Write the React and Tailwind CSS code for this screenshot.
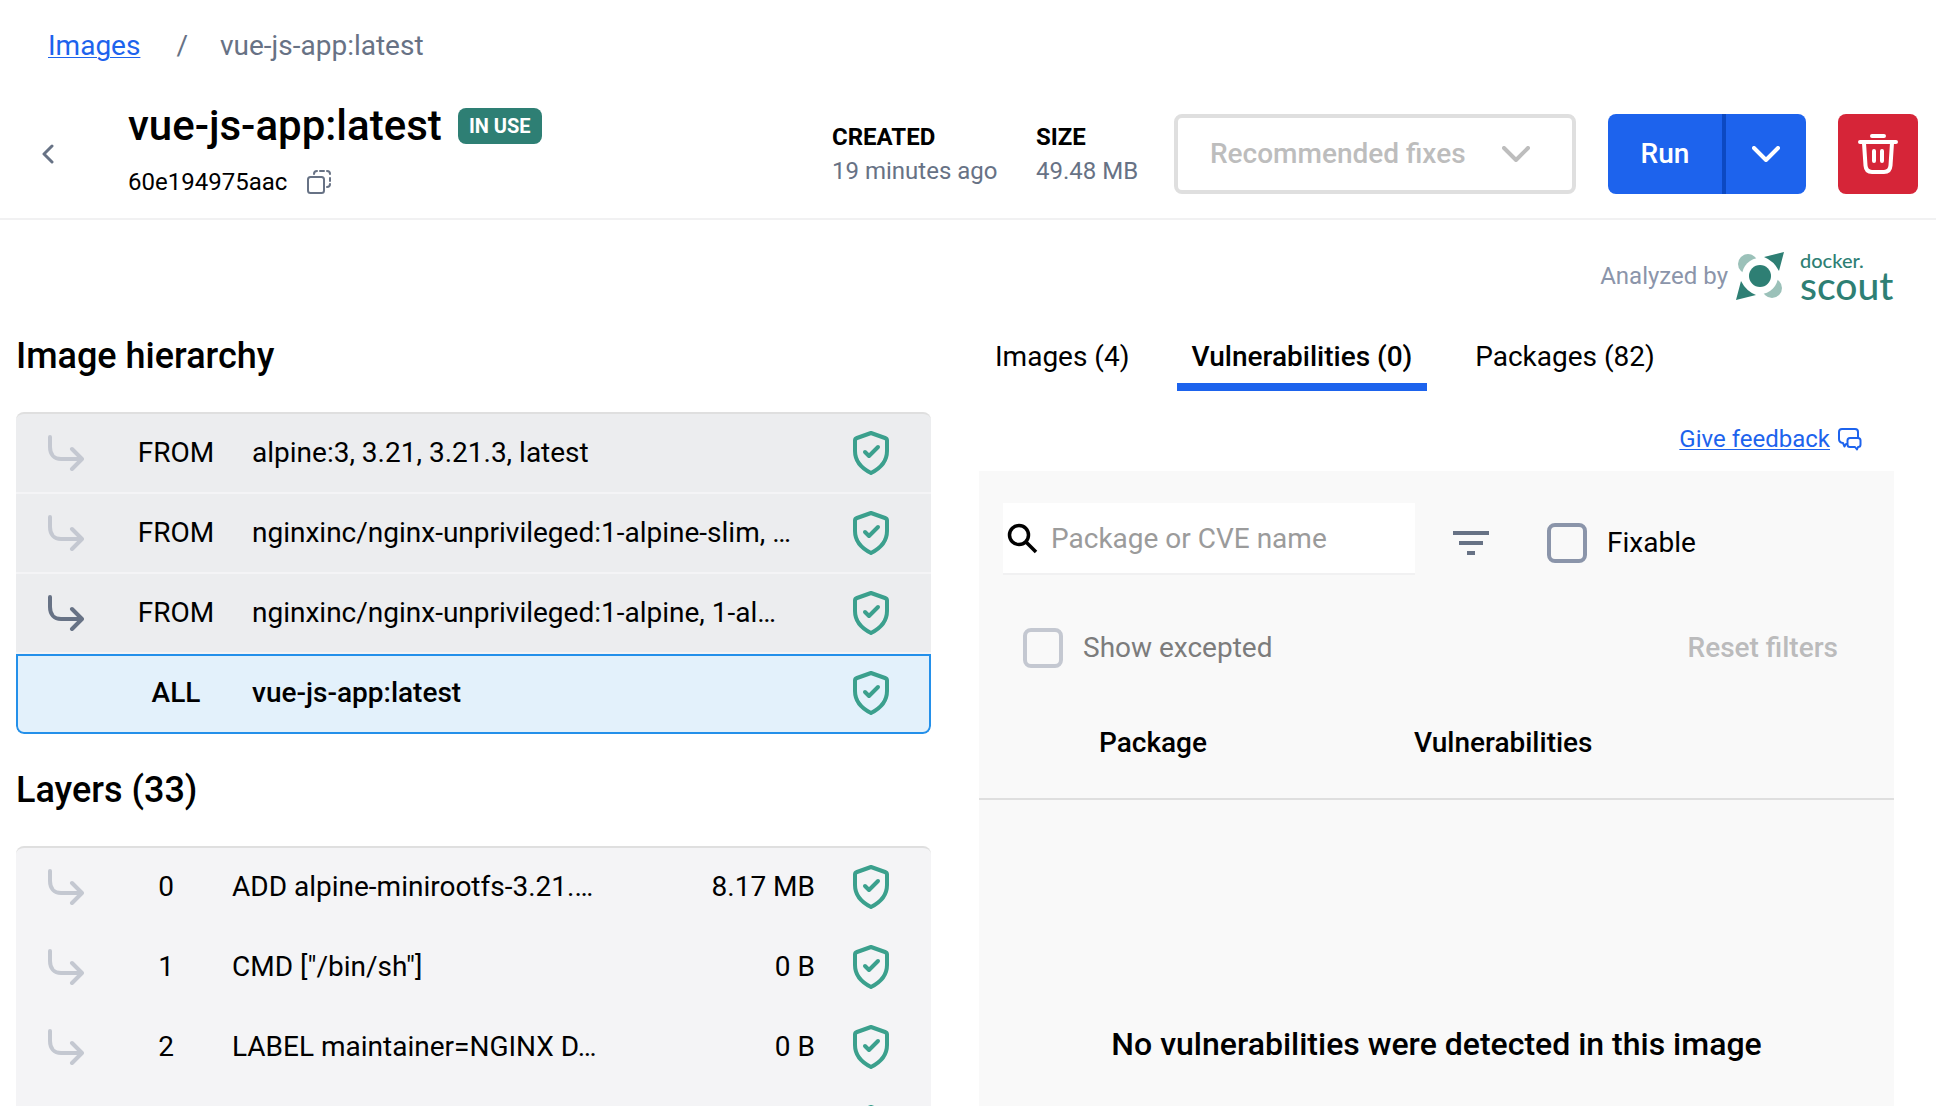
const hierarchy = [
  { kind: 'FROM', name: 'alpine:3, 3.21, 3.21.3, latest', arrow: 'text-[#c4c8d1]' },
  { kind: 'FROM', name: 'nginxinc/nginx-unprivileged:1-alpine-slim, …', arrow: 'text-[#c4c8d1]' },
  { kind: 'FROM', name: 'nginxinc/nginx-unprivileged:1-alpine, 1-al…', arrow: 'text-[#677285]' },
];

const layers = [
  { id: '0', command: 'ADD alpine-minirootfs-3.21.…', size: '8.17 MB' },
  { id: '1', command: 'CMD ["/bin/sh"]', size: '0 B' },
  { id: '2', command: 'LABEL maintainer=NGINX D…', size: '0 B' },
  { id: '', command: '', size: '' },
];

function BranchArrow({ className }) {
  return (
    <svg className={className} width="36" height="36" viewBox="0 0 36 36" fill="none" stroke="currentColor" strokeWidth="4" strokeLinecap="round" strokeLinejoin="round" aria-hidden="true">
      <path d="M2 2v10c0 7 4 12 11 12h20M24 14l10 10-10 10" />
    </svg>
  );
}

function ShieldCheck() {
  return (
    <svg className="shrink-0 text-[#3ba08d]" width="36" height="44" viewBox="0 0 36 44" fill="none" stroke="currentColor" strokeWidth="4" strokeLinecap="round" strokeLinejoin="round" aria-hidden="true">
      <path d="M18 2 32 7a3 3 0 0 1 2 3V20c0 10-6 17-16 22C8 37 2 30 2 20V10a3 3 0 0 1 2-3Z" />
      <path d="m12 21 4 4 9-9" />
    </svg>
  );
}

function ChevronDown() {
  return (
    <svg width="28" height="16" viewBox="0 0 28 16" fill="none" stroke="currentColor" strokeWidth="4" strokeLinecap="round" strokeLinejoin="round" aria-hidden="true">
      <path d="m2 2 12 12L26 2" />
    </svg>
  );
}

function ScoutMark() {
  return (
    <svg width="48" height="48" viewBox="0 0 48 48" aria-hidden="true">
      <circle cx="12" cy="12" r="10" fill="#9bc1b9" />
      <circle cx="36" cy="36" r="10" fill="#9bc1b9" />
      <circle cx="24" cy="24" r="18" fill="#fff" />
      <path d="M48 0 28 5Q38 9 43 19Z" fill="#2e7f74" />
      <path d="M0 48 5 29Q10 39 20 43Z" fill="#2e7f74" />
      <circle cx="24" cy="24" r="11" fill="#2e7f74" />
    </svg>
  );
}

export default function App() {
  return (
    <div className="h-screen overflow-hidden bg-white font-['Roboto',sans-serif] text-[28px] leading-10 text-black">
      <header className="border-b-2 border-[#f1f1f2] pb-0.5">
        <nav aria-label="Breadcrumb" className="flex h-[92px] items-center gap-8 pl-12 text-[#677285]">
          <a href="#images" className="mr-1 text-[#1d63ed] underline decoration-1 underline-offset-2">Images</a>
          <span>/</span>
          <span>vue-js-app:latest</span>
        </nav>
        <div className="flex items-center pr-[18px] pl-9">
          <button aria-label="Back" className="w-[92px] py-2 pl-1 text-[#677285]">
            <svg width="16" height="20" viewBox="0 0 16 20" fill="none" stroke="currentColor" strokeWidth="3" strokeLinecap="round" strokeLinejoin="round" aria-hidden="true">
              <path d="m12 2-8 8 8 8" />
            </svg>
          </button>
          <div className="grow pb-3">
            <div className="flex items-center gap-4">
              <h1 className="text-[42px] leading-[68px] font-medium">vue-js-app:latest</h1>
              <span className="w-[84px] rounded-lg bg-[#2e7f74] text-center text-xl leading-9 font-bold text-white">IN USE</span>
            </div>
            <div className="flex items-center gap-5 text-2xl leading-[44px]">
              <span>60e194975aac</span>
              <button aria-label="Copy image ID" className="text-[#677285]">
                <svg width="24" height="24" viewBox="0 0 24 24" fill="none" stroke="currentColor" strokeWidth="2" strokeLinecap="round" aria-hidden="true">
                  <rect x="1" y="7" width="16" height="16" rx="2.5" />
                  <path d="M7 4q0-3 3-3M13 1h4M20 1q3 0 3 3M23 8v3M23 14q0 3-3 3" />
                </svg>
              </button>
            </div>
          </div>
          <dl className="mr-8 flex text-2xl leading-[34px]">
            <div className="w-[204px]">
              <dt className="font-bold">CREATED</dt>
              <dd className="text-[#677285]">19 minutes ago</dd>
            </div>
            <div className="w-[106px]">
              <dt className="font-bold">SIZE</dt>
              <dd className="text-[#677285]">49.48 MB</dd>
            </div>
          </dl>
          <button disabled className="flex h-20 w-[402px] items-center justify-between rounded-lg border-4 border-[#dfdfdf] pr-[42px] pl-8 font-medium text-[#bdbdbd]">
            Recommended fixes
            <ChevronDown />
          </button>
          <div className="ml-8 flex h-20 overflow-hidden rounded-lg bg-[#1d63ed] font-medium text-white">
            <button className="w-[118px] border-r-4 border-[#0c49c2]">Run</button>
            <button aria-label="More run options" className="flex w-20 items-center justify-center">
              <ChevronDown />
            </button>
          </div>
          <button aria-label="Delete image" className="ml-8 flex size-20 items-center justify-center rounded-lg bg-[#d62538] text-white">
            <svg width="40" height="40" viewBox="0 0 40 40" fill="none" stroke="currentColor" strokeWidth="4" strokeLinecap="round" strokeLinejoin="round" aria-hidden="true">
              <path d="M14 2h12M2 8h36M6 9l1.500 22.500q.5 6.500 6.500 6.500h12q6 0 6.500-6.500L34 9M16 17v10M24 17v10" />
            </svg>
          </button>
        </div>
      </header>

      <div className="flex h-[111px] items-center justify-end pr-[42px]">
        <span className="mr-2 text-2xl text-[#8b95aa]">Analyzed by</span>
        <ScoutMark />
        <span className="ml-4 flex w-[94px] flex-col font-['Lato',sans-serif] font-medium text-[#2e7f74]">
          <span className="text-xl leading-5">docker.</span>
          <span className="text-[39px] leading-[31px]">scout</span>
        </span>
      </div>

      <main className="grid grid-cols-2 gap-12 pr-[42px] pl-4">
        <section>
          <h2 className="text-4xl leading-[50px] font-medium">Image hierarchy</h2>
          <ul className="mt-[31px] overflow-hidden rounded-lg border-t-2 border-[#dfdfdf] bg-[#ecedef]">
            {hierarchy.map((row) => (
              <li key={row.name} className="flex h-20 items-center border-b-2 border-[#f4f4f6] pr-[42px] pl-8">
                <BranchArrow className={row.arrow} />
                <span className="ml-8 w-[120px] text-center">{row.kind}</span>
                <span className="ml-4 min-w-0 grow truncate">{row.name}</span>
                <ShieldCheck />
              </li>
            ))}
            <li className="flex h-20 items-center rounded-b-lg border-2 border-[#2490ea] bg-[#e3f1fb] pr-10 pb-0.5 pl-[98px] font-medium">
              <span className="w-[120px] text-center">ALL</span>
              <span className="ml-4 grow">vue-js-app:latest</span>
              <ShieldCheck />
            </li>
          </ul>

          <h2 className="mt-[31px] text-4xl leading-[50px] font-medium">Layers (33)</h2>
          <ul className="mt-[31px] rounded-lg border-t-2 border-[#dfdfdf] bg-[#f4f4f6]">
            {layers.map((row) => (
              <li key={row.id} className="flex h-20 items-center pr-[42px] pb-0.5 pl-8">
                <BranchArrow className="text-[#c4c8d1]" />
                <span className="ml-8 w-[100px] text-center">{row.id}</span>
                <span className="ml-4 min-w-0 grow truncate">{row.command}</span>
                <span className="mr-[38px]">{row.size}</span>
                <ShieldCheck />
              </li>
            ))}
          </ul>
        </section>

        <section>
          <div role="tablist" className="flex">
            <button role="tab" aria-selected="false" className="w-[198px] border-b-8 border-transparent pl-4 text-left leading-[52px]">Images (4)</button>
            <button role="tab" aria-selected="true" className="w-[250px] border-b-8 border-[#1d63ed] leading-[52px] font-medium">Vulnerabilities (0)</button>
            <button role="tab" aria-selected="false" className="w-[276px] border-b-8 border-transparent leading-[52px]">Packages (82)</button>
          </div>
          <div className="flex h-20 items-center justify-end gap-2 pt-4 pr-8 text-2xl text-[#1d63ed]">
            <a href="#feedback" className="underline decoration-1 underline-offset-2">Give feedback</a>
            <svg width="24" height="24" viewBox="0 0 24 24" fill="none" stroke="currentColor" strokeWidth="2" strokeLinejoin="round" aria-hidden="true">
              <path d="M9 17H8l-1.500 2.500L5 16q-4-.5-4-4V5q0-3 3-3h13q3 0 3 3v6" />
              <path d="M12 11h8q2.500 0 2.500 2.500v4q0 2.500-2.500 2.500l-1 2.500-2-2.500h-5q-2.500 0-2.500-2.500v-4Q9.500 11 12 11Z" />
            </svg>
          </div>
          <div className="bg-[#f9f9f9]">
            <div className="flex items-center pt-8 pl-6">
              <label className="flex h-[72px] w-[412px] items-center border-b-2 border-[#f1f1f2] bg-white pt-0.5 pl-1">
                <svg width="32" height="32" viewBox="0 0 32 32" fill="none" stroke="currentColor" strokeWidth="3.5" aria-hidden="true">
                  <circle cx="12" cy="12" r="9.500" />
                  <path d="m19 19 10 10" />
                </svg>
                <input type="text" aria-label="Package or CVE name" placeholder="Package or CVE name" className="ml-3 min-w-0 grow outline-none placeholder:text-[#9b9b9b]" />
              </label>
              <div className="flex items-center pt-2">
                <button aria-label="Filter" className="ml-[38px] text-[#677285]">
                  <svg width="36" height="24" viewBox="0 0 36 24" fill="currentColor" aria-hidden="true">
                    <path d="M0 0h36v4H0zM6 10h24v4H6zM14 20h8v4h-8z" />
                  </svg>
                </button>
                <label className="ml-[58px] flex items-center gap-5">
                  <input type="checkbox" className="size-10 appearance-none rounded-lg border-4 border-[#8b95aa]" />
                  Fixable
                </label>
              </div>
            </div>
            <div className="mt-[53px] flex items-center justify-between pr-14 pl-11">
              <label className="flex items-center gap-5 text-[#7c7c7c]">
                <input type="checkbox" disabled className="size-10 appearance-none rounded-lg border-4 border-[#c4c8d1]" />
                Show excepted
              </label>
              <button disabled className="font-medium text-[#bbbbbc]">Reset filters</button>
            </div>
            <table className="mt-4 w-full table-fixed text-left">
              <thead>
                <tr className="h-[115px] border-b-2 border-[#dfdfdf]">
                  <th scope="col" className="w-[435px] pt-1 pl-[120px] font-medium">Package</th>
                  <th scope="col" className="pt-1 font-medium">Vulnerabilities</th>
                </tr>
              </thead>
              <tbody>
                <tr>
                  <td colSpan={2} className="h-[488px] text-center text-[32px] font-medium">No vulnerabilities were detected in this image</td>
                </tr>
              </tbody>
            </table>
          </div>
        </section>
      </main>
    </div>
  );
}
